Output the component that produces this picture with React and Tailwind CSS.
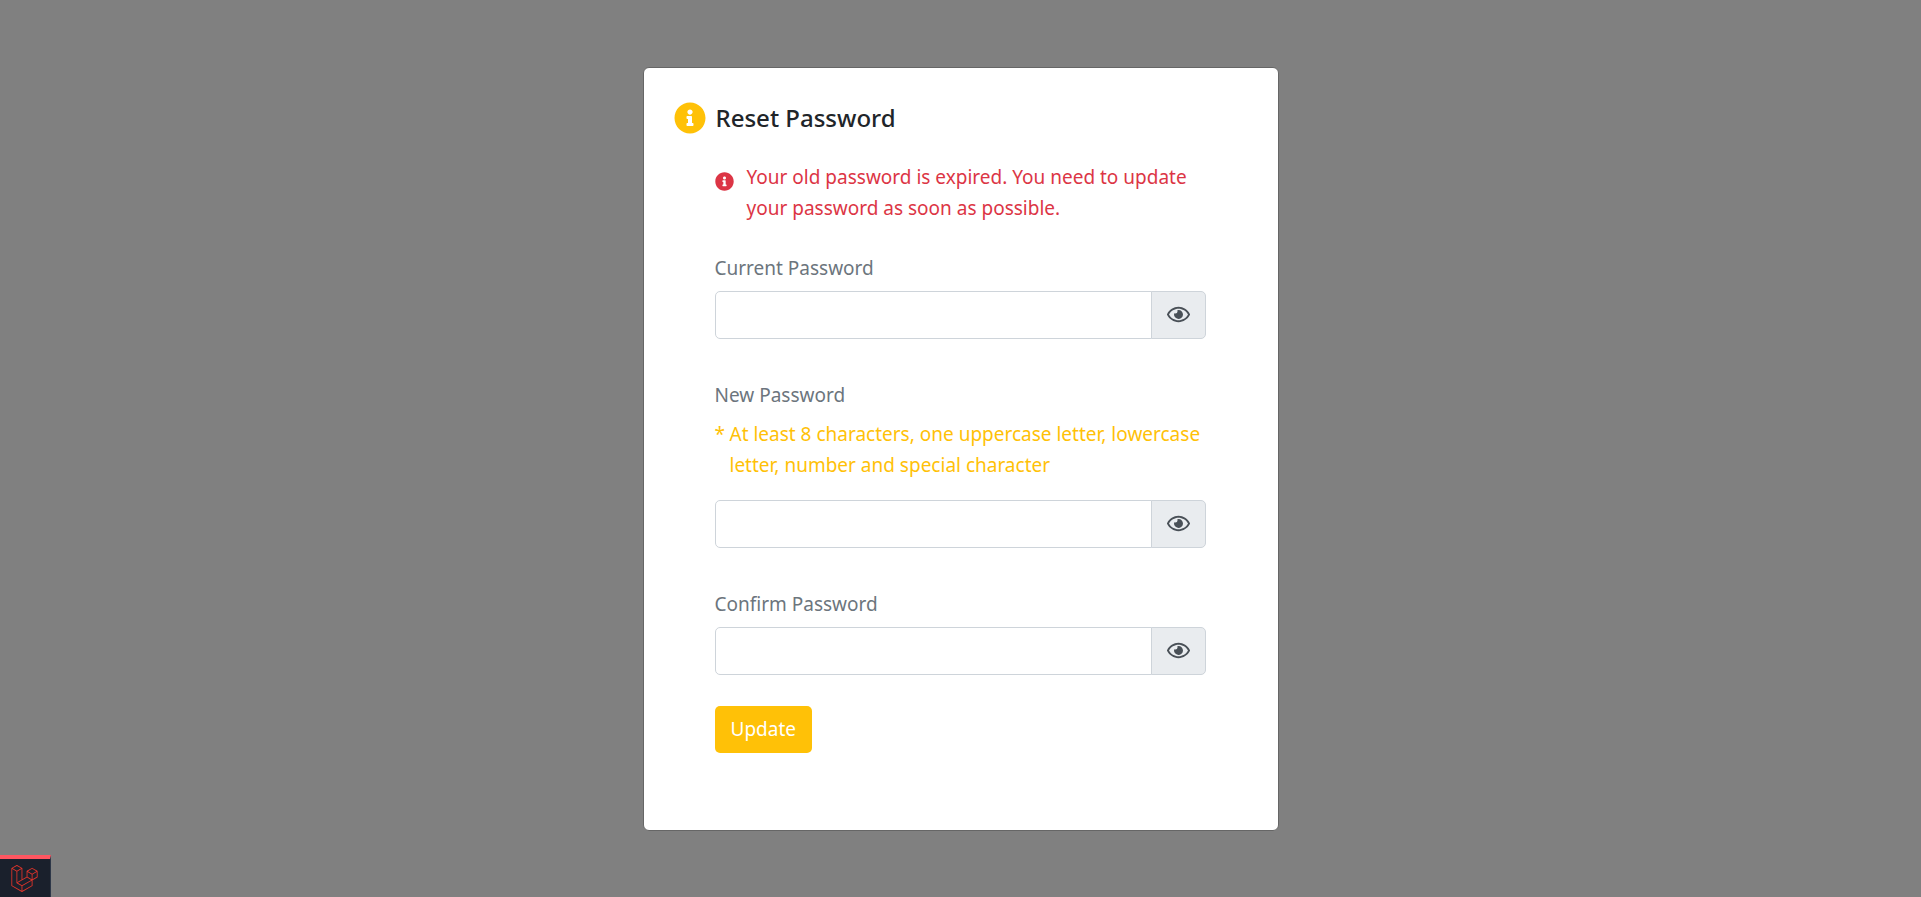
import { useState } from "react";
import { FaInfoCircle, FaRegEye, FaLaravel } from "react-icons/fa";

function PasswordField({ id, label, hint }) {
  const [visible, setVisible] = useState(false);
  return (
    <div>
      <label htmlFor={id} className="block text-[#6c757d]">
        {label}
      </label>
      {hint && (
        <p className="mt-2 flex gap-[5px] text-[#ffc107]">
          <span className="w-[10px] shrink-0">*</span>
          <span>{hint}</span>
        </p>
      )}
      <div className={hint ? "mt-[19px] flex" : "mt-[7px] flex"}>
        <input
          id={id}
          type={visible ? "text" : "password"}
          className="h-12 min-w-0 flex-1 rounded-l-[5px] border border-[#ced4da] bg-white px-4"
        />
        <button
          type="button"
          aria-label="Toggle password visibility"
          onClick={() => setVisible(!visible)}
          className="-ml-px flex h-12 w-[55px] items-center justify-center rounded-r-[5px] border border-[#ced4da] bg-[#e9ecef] text-[#495057]"
        >
          <FaRegEye size={23} />
        </button>
      </div>
    </div>
  );
}

export default function App() {
  return (
    <div className="flex min-h-screen items-center justify-center bg-[#808080] font-['Noto_Sans',sans-serif] text-[19px] leading-[31px]">
      <main className="w-full max-w-[636px] rounded-md border border-[#666666] bg-white px-[30px] pt-[34px] pb-[77px]">
        <h1 className="flex items-center gap-[10px] text-[24px] leading-[31px] font-medium text-[#212529]">
          <FaInfoCircle size={32} className="shrink-0 text-[#ffc107]" />
          Reset Password
        </h1>
        <form className="mt-7 mr-[42px] ml-[41px]" onSubmit={(e) => e.preventDefault()}>
          <p className="flex gap-[13px] text-[#dc3545]">
            <FaInfoCircle size={19} className="mt-[10px] shrink-0" />
            <span>Your old password is expired. You need to update your password as soon as possible.</span>
          </p>
          <div className="mt-[29px] flex flex-col gap-[41px]">
            <PasswordField id="current" label="Current Password" />
            <PasswordField
              id="new"
              label="New Password"
              hint="At least 8 characters, one uppercase letter, lowercase letter, number and special character"
            />
            <PasswordField id="confirm" label="Confirm Password" />
          </div>
          <button type="submit" className="mt-[31px] rounded-[5px] bg-[#ffc107] px-4 py-2 text-white">
            Update
          </button>
        </form>
      </main>
      <button
        type="button"
        aria-label="Open debug bar"
        className="fixed bottom-0 left-0 flex h-[42px] w-[51px] items-center justify-center border-t-4 border-r border-t-[#ff5661] border-r-[#2d3748] bg-[#1a202c] pr-px text-[#e0342b]"
      >
        <FaLaravel size={27} />
      </button>
    </div>
  );
}
